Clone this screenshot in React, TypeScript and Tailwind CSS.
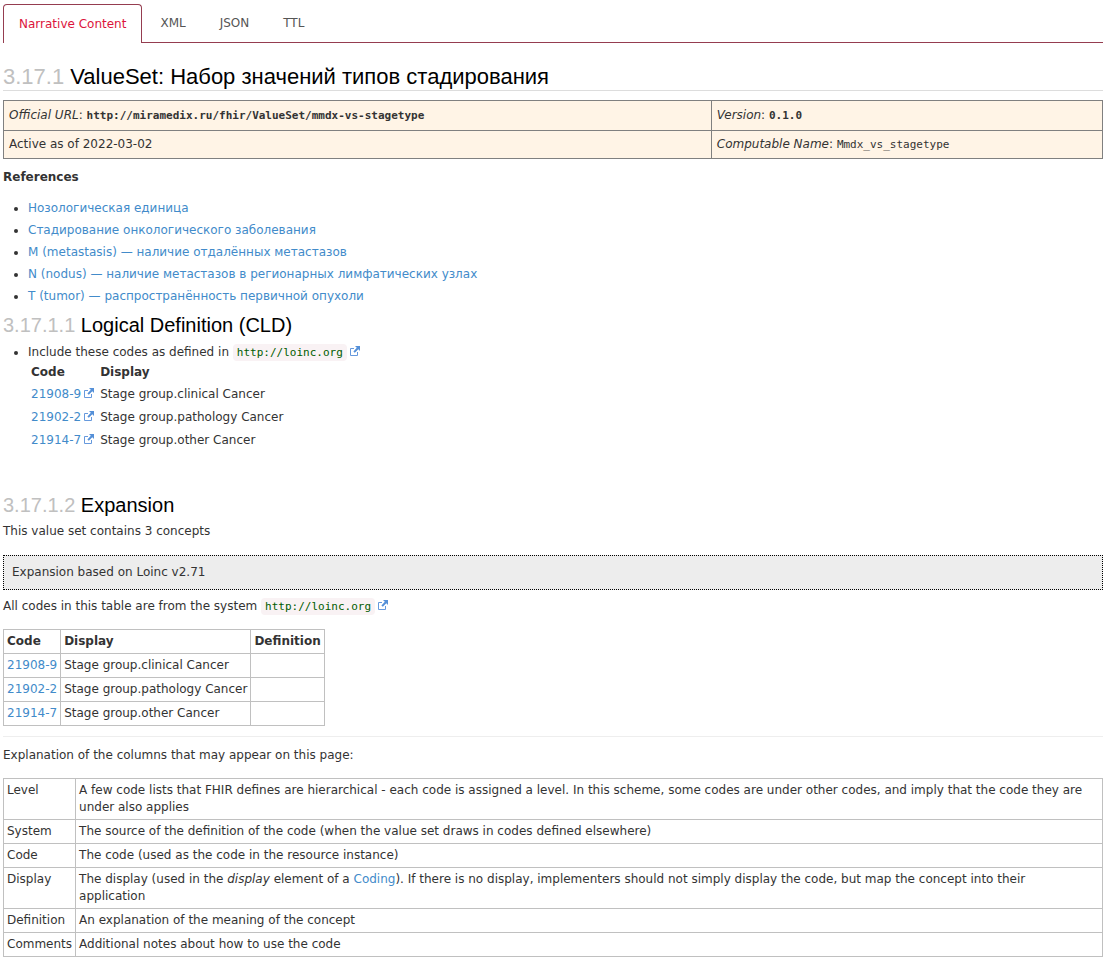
import type { ReactNode } from "react";

const references = [
  "Нозологическая единица",
  "Стадирование онкологического заболевания",
  "M (metastasis) — наличие отдалённых метастазов",
  "N (nodus) — наличие метастазов в регионарных лимфатических узлах",
  "T (tumor) — распространённость первичной опухоли",
];

const codes = [
  { code: "21908-9", display: "Stage group.clinical Cancer" },
  { code: "21902-2", display: "Stage group.pathology Cancer" },
  { code: "21914-7", display: "Stage group.other Cancer" },
];

const columns: { name: string; text: ReactNode }[] = [
  {
    name: "Level",
    text: "A few code lists that FHIR defines are hierarchical - each code is assigned a level. In this scheme, some codes are under other codes, and imply that the code they are under also applies",
  },
  {
    name: "System",
    text: "The source of the definition of the code (when the value set draws in codes defined elsewhere)",
  },
  { name: "Code", text: "The code (used as the code in the resource instance)" },
  {
    name: "Display",
    text: (
      <>
        The display (used in the <i>display</i> element of a <Link>Coding</Link>). If there is no
        display, implementers should not simply display the code, but map the concept into their
        application
      </>
    ),
  },
  { name: "Definition", text: "An explanation of the meaning of the concept" },
  { name: "Comments", text: "Additional notes about how to use the code" },
];

function Link({ children }: { children: ReactNode }) {
  return (
    <a href="#" className="text-[#428bca]">
      {children}
    </a>
  );
}

function ExternalIcon() {
  return (
    <svg
      viewBox="0 0 10 10"
      className="ml-[3px] inline-block size-[10px] align-baseline"
      fill="none"
      aria-hidden="true"
    >
      <path d="M4 2.5H.5v7h7V6" stroke="#6699dd" />
      <path d="M5 0h5v5L8.3 3.3 4.8 6.8 3.4 5.4l3.4-3.6z" fill="#5590d8" />
    </svg>
  );
}

function CodeSystem() {
  return (
    <a href="#" className="whitespace-nowrap">
      <code className="rounded bg-[#f9f2f4] px-1 py-[2px] font-['DejaVu_Sans_Mono',monospace] text-[11px] text-[#005c00]">
        http://loinc.org
      </code>
      <ExternalIcon />
    </a>
  );
}

function SectionTitle({ number, children }: { number: string; children: ReactNode }) {
  return (
    <h3 className="font-['Liberation_Sans',Arial,sans-serif] text-[20px] leading-[22px] text-black">
      <span className="text-[#c0c0c0]">{number}</span> {children}
    </h3>
  );
}

function Tab({ children }: { children: ReactNode }) {
  return (
    <button type="button" role="tab" aria-selected="false" className="px-4 pt-px text-[#555555]">
      {children}
    </button>
  );
}

export default function App() {
  return (
    <main className="bg-white px-[3px] pt-1 font-['DejaVu_Sans',Verdana,sans-serif] text-[12px] leading-[17px] text-[#333333]">
      <div role="tablist" className="flex h-[39px] gap-[2px] border-b border-[#953d50]">
        <button
          type="button"
          role="tab"
          aria-selected="true"
          className="-mb-px rounded-t border border-b-0 border-[#953d50] bg-white px-[15px] text-[#dc143c]"
        >
          Narrative Content
        </button>
        <Tab>XML</Tab>
        <Tab>JSON</Tab>
        <Tab>TTL</Tab>
      </div>

      <h2 className="mt-5 border-b border-[#dddddd] font-['Liberation_Sans',Arial,sans-serif] text-[22px] leading-[27px] text-black">
        <span className="text-[#c0c0c0]">3.17.1</span> ValueSet: Набор значений типов стадирования
      </h2>

      <table className="mt-[9px] w-full border-collapse bg-[#fff4e6] [&_td]:border [&_td]:border-[#808080] [&_td]:px-[5px]">
        <tbody>
          <tr className="h-[30px]">
            <td className="w-[64.4%]">
              <i>Official URL</i>:{" "}
              <code className="font-['DejaVu_Sans_Mono',monospace] text-[11px] font-bold">
                http://miramedix.ru/fhir/ValueSet/mmdx-vs-stagetype
              </code>
            </td>
            <td>
              <i>Version</i>:{" "}
              <code className="font-['DejaVu_Sans_Mono',monospace] text-[11px] font-bold">0.1.0</code>
            </td>
          </tr>
          <tr className="h-7">
            <td>Active as of 2022-03-02</td>
            <td>
              <i>Computable Name</i>:{" "}
              <code className="font-['DejaVu_Sans_Mono',monospace] text-[11px]">Mmdx_vs_stagetype</code>
            </td>
          </tr>
        </tbody>
      </table>

      <p className="mt-[10px] font-bold">References</p>
      <ul className="mt-[11px] list-disc pl-[25px] leading-[22px]">
        {references.map((item) => (
          <li key={item}>
            <Link>{item}</Link>
          </li>
        ))}
      </ul>

      <div className="mt-[7px]">
        <SectionTitle number="3.17.1.1">Logical Definition (CLD)</SectionTitle>
      </div>
      <ul className="mt-2 list-disc pl-[25px]">
        <li>
          Include these codes as defined in <CodeSystem />
          <table className="mt-[3px] ml-[3px] border-collapse text-left">
            <thead>
              <tr className="h-[19px] align-top">
                <th className="pr-[6px]">Code</th>
                <th>Display</th>
              </tr>
            </thead>
            <tbody>
              {codes.map(({ code, display }) => (
                <tr key={code} className="h-[23px]">
                  <td className="pr-[6px] whitespace-nowrap">
                    <Link>
                      {code}
                      <ExternalIcon />
                    </Link>
                  </td>
                  <td>{display}</td>
                </tr>
              ))}
            </tbody>
          </table>
        </li>
      </ul>

      <div className="mt-[42px]">
        <SectionTitle number="3.17.1.2">Expansion</SectionTitle>
      </div>
      <p className="mt-[7px]">This value set contains 3 concepts</p>
      <div className="mt-[15px] border border-dotted border-black bg-[#ededed] px-2 py-2">
        Expansion based on Loinc v2.71
      </div>
      <p className="mt-2">
        All codes in this table are from the system <CodeSystem />
      </p>

      <table className="mt-[14px] border-collapse text-left [&_td]:border [&_td]:border-[#c0c0c0] [&_td]:px-[3px] [&_th]:border [&_th]:border-[#c0c0c0] [&_th]:px-[3px]">
        <thead>
          <tr className="h-6">
            <th>Code</th>
            <th>Display</th>
            <th>Definition</th>
          </tr>
        </thead>
        <tbody>
          {codes.map(({ code, display }) => (
            <tr key={code} className="h-6">
              <td>
                <Link>{code}</Link>
              </td>
              <td>{display}</td>
              <td />
            </tr>
          ))}
        </tbody>
      </table>

      <hr className="mt-[10px] border-[#eeeeee]" />
      <p className="mt-[10px]">Explanation of the columns that may appear on this page:</p>

      <table className="mt-[14px] w-full border-collapse">
        <tbody>
          {columns.map(({ name, text }) => (
            <tr key={name} className="align-top">
              <td className="w-px border border-[#c0c0c0] p-[3px]">{name}</td>
              <td className="border border-[#c0c0c0] py-[3px] pr-3 pl-[3px]">{text}</td>
            </tr>
          ))}
        </tbody>
      </table>
    </main>
  );
}
